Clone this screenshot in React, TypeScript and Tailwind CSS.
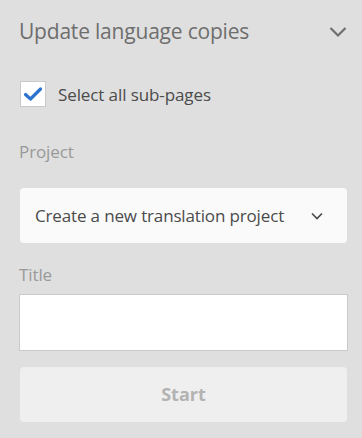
import React from "react";

export default function App() {
  return (
    <div className="w-[362px] h-[438px] bg-[#dfdfdf] overflow-hidden" style={{ fontFamily: '"Open Sans", "Noto Sans", sans-serif' }}>
      <div className="flex items-start justify-between pl-[19px] pr-[15px] pt-[21px]">
        <span className="text-[21px] text-[#6e6e6e] tracking-[-0.2px] leading-[21px]">Update language copies</span>
        <svg width="18" height="12" viewBox="0 0 18 12" className="mt-[5px]">
          <path d="M1.5 2 L9 9.5 L16.5 2" fill="none" stroke="#6e6e6e" strokeWidth="2.2" />
        </svg>
      </div>
      <div className="flex items-center gap-[12px] pl-[20px] mt-[39px]">
        <div className="w-[26px] h-[26px] bg-white border border-[#c9c9c9] flex items-center justify-center">
          <svg width="20" height="16" viewBox="0 0 20 16">
            <path d="M2.5 8.5 L7.5 13 L17.5 3" fill="none" stroke="#2d74cf" strokeWidth="3.2" strokeLinecap="round" strokeLinejoin="round" />
          </svg>
        </div>
        <span className="text-[17px] text-[#4b4b4b] leading-none tracking-[-0.1px]">Select all sub-pages</span>
      </div>
      <div className="pl-[19px] mt-[36px] text-[17px] text-[#999999] leading-none tracking-[-0.1px]">Project</div>
      <div className="ml-[20px] mr-[15px] mt-[28px] h-[55px] rounded-[4px] bg-[#fafafa] flex items-center justify-between pl-[15px] pr-[24px]">
        <span className="text-[17px] text-[#4b4b4b] tracking-[-0.15px]">Create a new translation project</span>
        <svg width="12" height="8" viewBox="0 0 12 8">
          <path d="M1 1.5 L6 6.5 L11 1.5" fill="none" stroke="#4b4b4b" strokeWidth="1.7" />
        </svg>
      </div>
      <div className="pl-[19px] mt-[23px] text-[17px] text-[#999999] leading-none tracking-[-0.1px]">Title</div>
      <div className="ml-[19px] mr-[14px] mt-[11px] h-[57px] bg-white border border-[#cacaca]"></div>
      <div className="ml-[20px] mr-[15px] mt-[16px] h-[55px] rounded-[4px] bg-[#efefef] flex items-center justify-center">
        <span className="text-[18px] font-bold text-[#b3b3b3]">Start</span>
      </div>
    </div>
  );
}
